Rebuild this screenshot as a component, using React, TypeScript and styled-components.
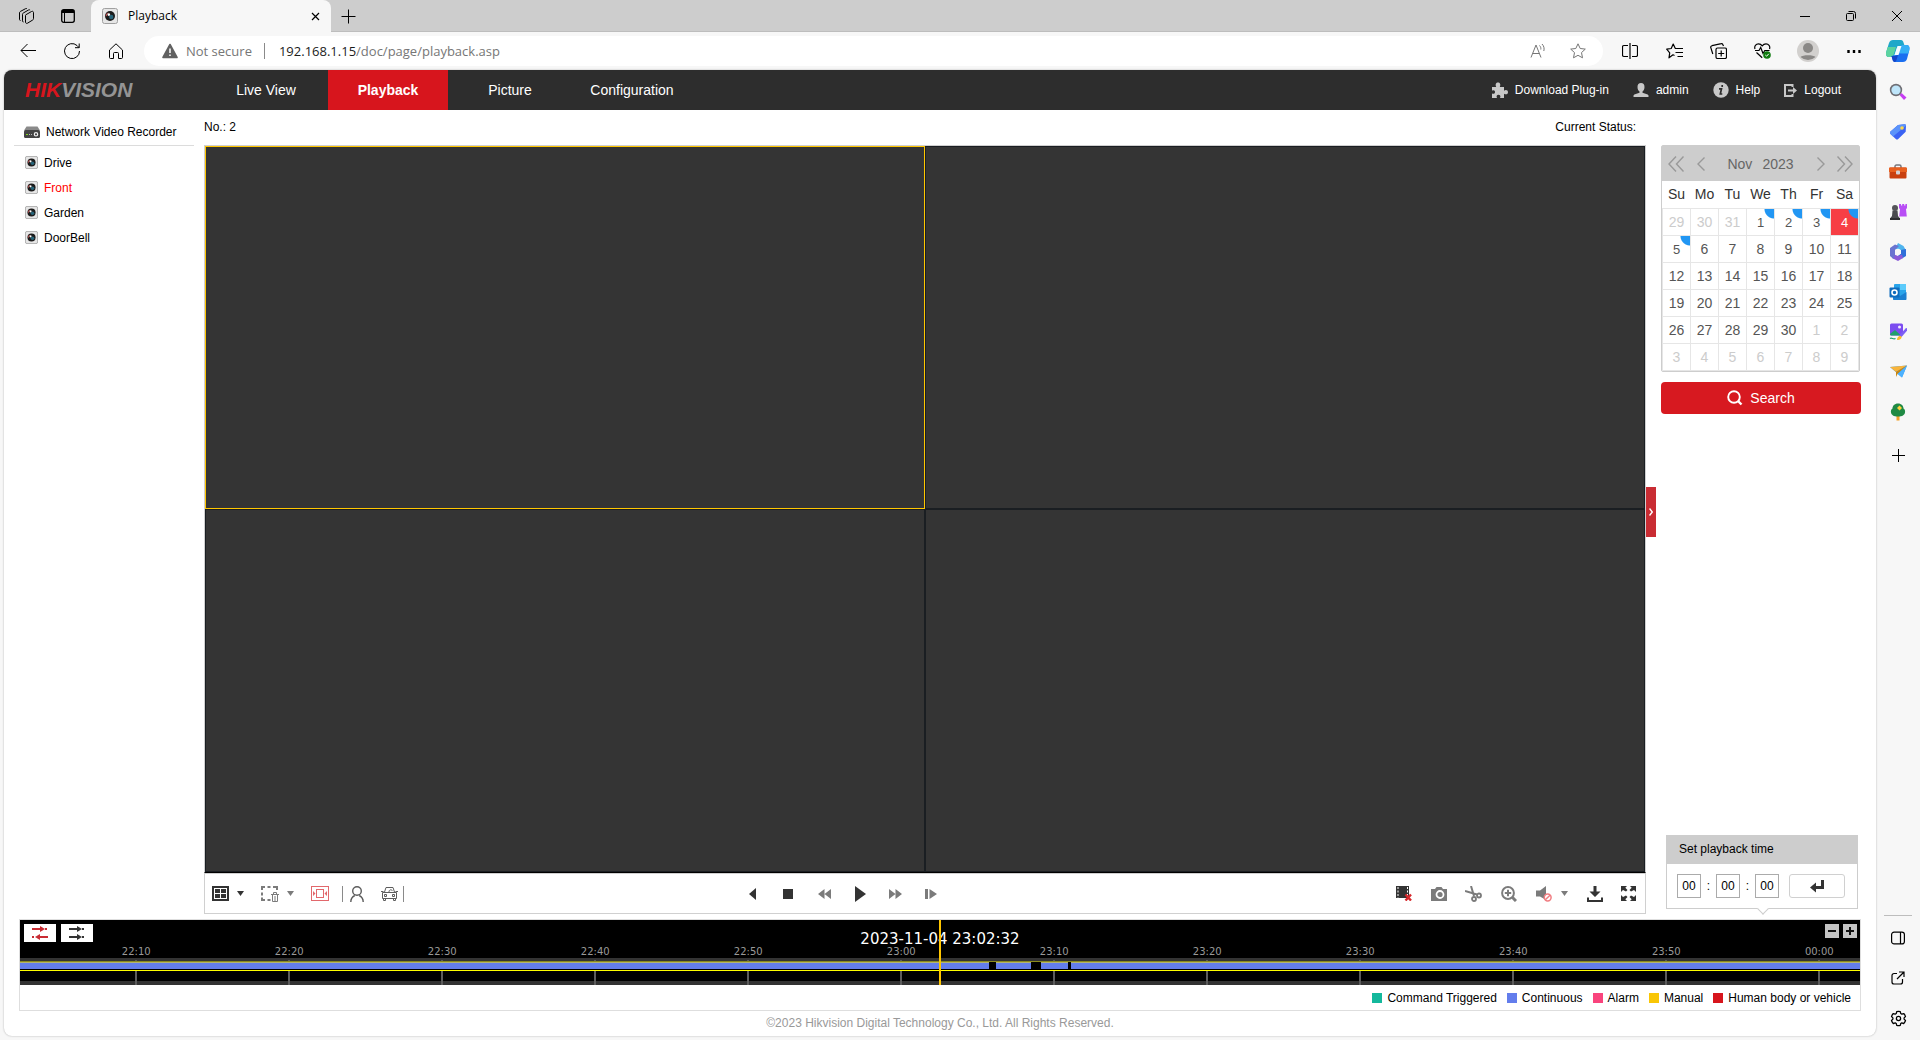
import React from "react";
import styled, { createGlobalStyle, css } from "styled-components";

const UI_FONT = '"Open Sans", "Noto Sans", sans-serif';
const PAGE_FONT = '"Liberation Sans", Arial, sans-serif';
const CANVAS_FONT = '"DejaVu Sans", Verdana, sans-serif';

const GlobalStyle = createGlobalStyle`
  *, *::before, *::after { box-sizing: border-box; }
  body { margin: 0; background: #f7f7f7; color: #000; font-family: ${PAGE_FONT}; font-size: 12px; line-height: 16px; }
  button, input { font: inherit; color: inherit; }
  ul { list-style: none; margin: 0; padding: 0; }
  svg { display: block; flex: none; }
`;

/* ---------- shared ---------- */

const PlainButton = styled.button`
  display: flex;
  align-items: center;
  justify-content: center;
  padding: 0;
  border: 0;
  background: none;
  cursor: pointer;
`;

type IconProps = { w: number; h?: number; box?: string; children: React.ReactNode };
const Icon = ({ w, h = w, box, children }: IconProps) => (
  <svg width={w} height={h} viewBox={box ?? `0 0 ${w} ${h}`} fill="none" stroke="currentColor" aria-hidden="true">
    {children}
  </svg>
);

/* ---------- browser window ---------- */

const Window = styled.div`
  display: flex;
  flex-direction: column;
  min-height: 100vh;
`;

const TitleBar = styled.header`
  display: flex;
  height: 32px;
  background: #cdcdcd;
  box-shadow: inset 0 -1px 0 #bdbdbd;
  font-family: ${UI_FONT};
`;

const TitleTools = styled.div`
  display: flex;
  padding: 0 2px 0 5px;
`;

const TitleTool = styled(PlainButton)`
  width: 42px;
`;

const Tab = styled.div`
  display: flex;
  align-items: center;
  gap: 10px;
  width: 240px;
  height: 32px;
  padding: 0 8px 0 11px;
  border-radius: 8px 8px 0 0;
  background: #f7f7f7;
`;

const TabTitle = styled.span`
  flex: 1;
  font-size: 12px;
`;

const TabClose = styled(PlainButton)`
  width: 16px;
  height: 16px;
`;

const NewTab = styled(PlainButton)`
  width: 34px;
`;

const WindowControls = styled.div`
  display: flex;
  margin-left: auto;
`;

const WindowControl = styled(PlainButton)`
  width: 46px;
`;

const Toolbar = styled.div`
  display: flex;
  align-items: center;
  height: 38px;
  padding-left: 6px;
  font-family: ${UI_FONT};
`;

const ToolbarButton = styled(PlainButton)<{ $w?: number }>`
  width: ${(p) => p.$w ?? 44}px;
  height: 30px;
`;

const AddressBar = styled.div`
  display: flex;
  flex: 1;
  align-items: center;
  height: 30px;
  margin: 0 5px 0 6px;
  padding: 0 5px 0 18px;
  border-radius: 15px;
  background: #fff;
  color: #767676;
  font-size: 13px;
`;

const Security = styled.span`
  display: flex;
  align-items: center;
  gap: 8px;
  padding-right: 12px;
  border-right: 1px solid #8a8a8a;
`;

const Url = styled.span`
  flex: 1;
  padding-left: 14px;
  b {
    color: #1b1b1b;
    font-weight: 400;
  }
`;

const Body = styled.div`
  display: flex;
  flex: 1;
`;

const Rail = styled.aside`
  display: flex;
  flex-direction: column;
  width: 44px;
  padding: 2px 0;
`;

const RailButton = styled(PlainButton)`
  width: 44px;
  height: 40px;
`;

const RailAdd = styled(RailButton)`
  height: 46px;
`;

const RailBottom = styled.div`
  margin-top: auto;
`;

const RailRule = styled.hr`
  width: 28px;
  margin: 0 auto 2px;
  border: 0;
  border-top: 1px solid #bdbdbd;
`;

/* ---------- recorder page ---------- */

const Page = styled.main`
  display: flex;
  flex: 1;
  flex-direction: column;
  margin: 0 0 4px 4px;
  border-radius: 8px;
  background: #fff;
  box-shadow: 0 0 2px rgba(0, 0, 0, 0.3);
  overflow: hidden;
`;

const Header = styled.div`
  display: flex;
  align-items: center;
  height: 40px;
  padding: 0 35px 0 21px;
  background: #2d2d2d;
  color: #fff;
`;

const Logo = styled.span`
  width: 181px;
  color: #949494;
  font-size: 21px;
  font-style: italic;
  font-weight: 700;
  line-height: 40px;
  b {
    color: #d7151d;
  }
`;

const Nav = styled.nav`
  display: flex;
  gap: 2px;
`;

const NavLink = styled.a<{ $active?: boolean }>`
  width: 120px;
  color: #fff;
  font-size: 14px;
  font-weight: ${(p) => (p.$active ? 700 : 400)};
  line-height: 40px;
  text-align: center;
  text-decoration: none;
  background: ${(p) => (p.$active ? "#d7151d" : "none")};
`;

const UserLinks = styled.div`
  display: flex;
  gap: 24px;
  margin-left: auto;
`;

const UserLink = styled.a`
  display: flex;
  align-items: center;
  gap: 7px;
  color: #fff;
  text-decoration: none;
  svg {
    color: #c8c8c8;
  }
`;

const Workspace = styled.div`
  display: flex;
  flex: 1;
  padding-right: 15px;
`;

const Devices = styled.aside`
  width: 180px;
  margin: 0 10px;
`;

const DeviceTitle = styled.div`
  display: flex;
  align-items: center;
  gap: 6px;
  height: 36px;
  padding: 8px 0 0 10px;
  border-bottom: 1px solid #dcdcdc;
`;

const ChannelList = styled.ul`
  && {
    padding: 4px 0 0 11px;
  }
`;

const Channel = styled(PlainButton)<{ $active?: boolean }>`
  gap: 6px;
  height: 25px;
  color: ${(p) => (p.$active ? "#f00" : "#000")};
`;

const Viewer = styled.section`
  display: flex;
  flex: 1;
  flex-direction: column;
`;

const Status = styled.div`
  display: flex;
  align-items: center;
  justify-content: space-between;
  height: 35px;
  padding: 0 10px 1px 0;
`;

const VideoGrid = styled.div`
  display: grid;
  flex: 1;
  grid-template: 1fr 1fr / 1fr 1fr;
  border: 1px solid #d0d0d0;
  border-bottom: 1px solid #000;
`;

const VideoCell = styled.button<{ $active?: boolean }>`
  padding: 0;
  border: 1px solid ${(p) => (p.$active ? "#ffc600" : "#1a1e22")};
  background: #343434;
`;

const Controls = styled.div`
  display: flex;
  height: 41px;
  border: 1px solid #d0d0d0;
  color: #7b7b7b;
`;

const ControlsLeft = styled.div`
  display: flex;
  flex: 3 0 0;
  align-items: center;
  gap: 17px;
  padding-left: 7px;
`;

const ControlsCenter = styled.div`
  display: flex;
`;

const ControlsRight = styled.div`
  display: flex;
  flex: 4 0 0;
  justify-content: flex-end;
`;

const SplitControl = styled(PlainButton)<{ $dark?: boolean }>`
  gap: 8px;
  color: ${(p) => (p.$dark ? "#333" : "#7b7b7b")};
`;

const Filters = styled.div`
  display: flex;
  gap: 17px;
  height: 16px;
  margin-left: -4px;
  padding: 0 5px 0 7px;
  border: solid #8a8a8a;
  border-width: 0 1px;
  color: #5c5c5c;
`;

const ControlButton = styled(PlainButton)<{ $w?: number; $dark?: boolean }>`
  width: ${(p) => p.$w ?? 35}px;
  color: ${(p) => (p.$dark ? "#333" : "#7b7b7b")};
`;

const CaretButton = styled(ControlButton)`
  justify-content: flex-start;
`;

const SideHandle = styled(PlainButton)`
  align-self: center;
  width: 10px;
  height: 50px;
  background: #c92c33;
  color: #fff;
`;

const SidePanel = styled.aside`
  display: flex;
  flex-direction: column;
  width: 205px;
  padding: 35px 0 5px 5px;
`;

const Calendar = styled.section`
  width: 199px;
  border: 1px solid #cdcdcd;
  border-radius: 2px;
`;

const CalendarHead = styled.div`
  display: flex;
  align-items: center;
  height: 35px;
  padding: 0 6px;
  background: #cdcdcd;
  color: #666;
  font-size: 14px;
`;

const CalendarTitle = styled.span`
  display: flex;
  flex: 1;
  gap: 10px;
  justify-content: center;
`;

const CalendarStep = styled(PlainButton)<{ $w: number }>`
  width: ${(p) => p.$w}px;
  height: 20px;
  color: #999;
`;

const MonthTable = styled.table`
  width: 197px;
  border-collapse: collapse;
  table-layout: fixed;
  font-size: 14px;
  th {
    height: 27px;
    padding: 0;
    color: #333;
    font-weight: 400;
  }
`;

const Day = styled.td<{ $muted: boolean; $marked: boolean; $selected: boolean }>`
  height: 27px;
  padding: 0;
  border: 1px solid #e6e6e6;
  background-clip: padding-box;
  color: ${(p) => (p.$muted ? "#ccc" : "#555")};
  text-align: center;
  ${(p) =>
    p.$marked &&
    css`
      padding-top: 2px;
      background: radial-gradient(circle at 100% 0, #2196f3 9px, transparent 10px) no-repeat padding-box;
      font-size: 13px;
    `}
  ${(p) =>
    p.$selected &&
    css`
      background: radial-gradient(circle at 100% 0, #2196f3 9px, #f73f45 10px) no-repeat padding-box;
      color: #fff;
    `}
`;

const SearchButton = styled(PlainButton)`
  gap: 7px;
  height: 32px;
  margin-top: 10px;
  border-radius: 4px;
  background: #d71920;
  color: #fff;
  font-size: 14px;
`;

const TimeBox = styled.form`
  position: relative;
  margin: auto 3px 0 5px;
  border: 1px solid #cdcdcd;
  background: #fff;
  &::after {
    content: "";
    position: absolute;
    bottom: -5px;
    left: 92px;
    width: 8px;
    height: 8px;
    border: solid #cdcdcd;
    border-width: 0 1px 1px 0;
    background: #fff;
    transform: rotate(45deg);
  }
`;

const TimeTitle = styled.div`
  padding: 5px 12px 7px;
  background: #cdcdcd;
`;

const TimeFields = styled.div`
  display: flex;
  align-items: center;
  padding: 10px 12px 10px 10px;
`;

const TimeInput = styled.input`
  width: 24px;
  height: 24px;
  padding: 0;
  border: 1px solid #ababab;
  text-align: center;
`;

const Colon = styled.span`
  width: 15px;
  text-align: center;
`;

const GoButton = styled(PlainButton)`
  width: 56px;
  height: 24px;
  margin-left: auto;
  border: 1px solid #d0d0d0;
  border-radius: 3px;
  color: #333;
`;

/* ---------- timeline ---------- */

const TimelineBox = styled.section`
  margin: 5px 15px 0;
  border: 1px solid #dedede;
`;

const Timeline = styled.div`
  position: relative;
  height: 65px;
  overflow: hidden;
  background: #000;
  color: #999;
  font-family: ${CANVAS_FONT};
`;

const SyncButtons = styled.div`
  position: absolute;
  top: 4px;
  left: 4px;
  display: flex;
  gap: 5px;
`;

const SyncButton = styled(PlainButton)<{ $on?: boolean }>`
  width: 32px;
  height: 18px;
  background: #fff;
  color: ${(p) => (p.$on ? "#c92c33" : "#333")};
`;

const ZoomButtons = styled.div`
  position: absolute;
  top: 4px;
  right: 3px;
  display: flex;
  gap: 4px;
`;

const ZoomButton = styled(PlainButton)`
  width: 14px;
  height: 14px;
  background: #c4c4c4;
  color: #111;
`;

const Band = styled.div<{ $top: number; $h: number; $color: string }>`
  position: absolute;
  top: ${(p) => p.$top}px;
  right: 0;
  left: 0;
  height: ${(p) => p.$h}px;
  background: ${(p) => p.$color};
`;

const Gap = styled.div`
  position: absolute;
  top: 42px;
  height: 7px;
  background: #000;
`;

const Tick = styled.div`
  position: absolute;
  top: 26px;
  width: 60px;
  margin-left: -30px;
  font-size: 10px;
  line-height: 12px;
  text-align: center;
`;

const TickLine = styled.div<{ $top: number; $h: number }>`
  position: absolute;
  top: ${(p) => p.$top}px;
  width: 2px;
  height: ${(p) => p.$h}px;
  margin-left: -1px;
  background: #5c5c5c;
`;

const Cursor = styled.div`
  position: absolute;
  top: 0;
  bottom: 0;
  left: 50%;
  width: 2px;
  margin-left: -1px;
  background: #ffc600;
`;

const Now = styled.time`
  position: absolute;
  top: 11px;
  right: 0;
  left: 0;
  color: #fff;
  font-size: 15px;
  line-height: 16px;
  text-align: center;
`;

const Legend = styled.ul`
  && {
    display: flex;
    gap: 10px;
    align-items: center;
    justify-content: flex-end;
    height: 25px;
    padding-right: 9px;
  }
`;

const LegendItem = styled.li<{ $color: string }>`
  display: flex;
  gap: 5px;
  align-items: center;
  &::before {
    content: "";
    width: 10px;
    height: 10px;
    background: ${(p) => p.$color};
  }
`;

const Footer = styled.footer`
  height: 25px;
  color: #999;
  line-height: 24px;
  text-align: center;
`;

/* ---------- drawings ---------- */

const CameraIcon = ({ size }: { size: number }) => (
  <Icon w={size} box="0 0 16 16">
    <rect x="0.5" y="0.5" width="15" height="15" rx="2" fill="#e6e6e6" stroke="#a0a0a0" />
    <circle cx="8" cy="8" r="5" fill="#1c1c1c" stroke="none" />
    <circle cx="9.200" cy="9" r="2.200" fill="#28657a" stroke="none" />
    <path d="M5.800 4.800a4 4 0 0 0-1.600 3.400" stroke="#d55" />
    <circle cx="6.800" cy="6.600" r="1.300" fill="#fff" stroke="none" />
  </Icon>
);

const Caret = () => (
  <Icon w={7} h={5}>
    <path d="M0 0h7L3.5 5z" fill="currentColor" stroke="none" />
  </Icon>
);

const SyncIcon = ({ back }: { back?: boolean }) => (
  <Icon w={18} h={14}>
    <path d="M1 3h9M14 3h2" strokeWidth="2" />
    <path d="M9 0l5 3-5 3z" fill="currentColor" stroke="none" />
    {back ? (
      <>
        <path d="M8 11h9M1 11h2" strokeWidth="2" />
        <path d="M9 8l-5 3 5 3z" fill="currentColor" stroke="none" />
      </>
    ) : (
      <>
        <path d="M1 11h9M14 11h2" strokeWidth="2" />
        <path d="M9 8l5 3-5 3z" fill="currentColor" stroke="none" />
      </>
    )}
  </Icon>
);

const railIcons: [string, React.ReactNode][] = [
  [
    "Search",
    <g stroke="none" key="i">
      <path d="M10.500 12l2-2 5 4.500-2.500 2.500z" fill="#c63df2" />
      <circle cx="7" cy="7" r="6.200" fill="#6f6f75" />
      <circle cx="7" cy="7" r="4.600" fill="#bfe6fb" />
    </g>,
  ],
  [
    "Shopping",
    <g stroke="none" key="i">
      <path d="M9 2l6.500-.8c1 0 1.500.5 1.500 1.500l-.3 6-7.500 7.300c-.7.700-1.700.700-2.400 0L1.500 11c-.7-.7-.7-1.700 0-2.400z" fill="#3b63f3" />
      <path d="M9 2l6.500-.8c1 0 1.500.5 1.500 1.500L4 13.500 1.500 11c-.7-.7-.7-1.700 0-2.400z" fill="#5b93fa" />
      <circle cx="13" cy="5" r="1.800" fill="#ffd84a" />
    </g>,
  ],
  [
    "Tools",
    <g key="i">
      <path d="M6 5V3.500c0-.8.5-1.500 1.500-1.500h3c1 0 1.500.7 1.500 1.500V5" stroke="#77777d" strokeWidth="1.500" />
      <rect x="0.500" y="4.500" width="17" height="11" rx="1" fill="#c9400f" stroke="none" />
      <path d="M0 5.500c0-.6.400-1 1-1h16c.6 0 1 .4 1 1V9H0z" fill="#e8601f" stroke="none" />
      <rect x="7" y="7.500" width="4" height="4" rx="1" fill="#d3d3d8" stroke="none" />
    </g>,
  ],
  [
    "Games",
    <g stroke="none" key="i">
      <path d="M10 1h2v1.500h1.200V1h2v1.500h1.200V1H18v4l-1 1.200.8 7.300h-7.600L11 6.200 10 5z" fill="#b84ef5" />
      <circle cx="6" cy="5" r="3" fill="#55555a" />
      <path d="M3.500 7.500h5L9 13l2 2.500V17H1v-1.500L3 13z" fill="#4a4a4f" />
      <path d="M1 15h10v2H1z" fill="#2e2e32" />
    </g>,
  ],
  [
    "Microsoft 365",
    <g stroke="none" key="i">
      <path d="M9 0l5.500 3L17 7.500 12.500 9 11 6.500 6 6z" fill="#4fb4ee" />
      <path d="M17 6v7l-4 2.500-4-3 3-2V7z" fill="#2f6fd9" />
      <path d="M14 15l-5 3-6-3 1-4 5 2 4-1.500z" fill="#8a5bd8" />
      <path d="M1 5l5-3.500L10 3 6 7v5l-1.500 4L1 13z" fill="#6a74d0" />
      <path d="M9 5.500l3 1.700v3.600l-3 1.700-3-1.700V7.200z" fill="#f7f7f7" />
    </g>,
  ],
  [
    "Outlook",
    <g stroke="none" key="i">
      <rect x="5" y="1" width="12" height="12" rx="1" fill="#2aa4ea" />
      <rect x="11" y="1" width="6" height="6" fill="#5ccbfb" />
      <path d="M4 9l7 4 6.500-4v7c0 .6-.4 1-1 1H5c-.6 0-1-.4-1-1z" fill="#1b7fd1" />
      <rect x="0.500" y="4.500" width="10" height="10" rx="1" fill="#0f6cbd" />
      <circle cx="5.500" cy="9.500" r="2.500" fill="none" stroke="#fff" strokeWidth="1.600" />
    </g>,
  ],
  [
    "Image Creator",
    <g stroke="none" key="i">
      <rect x="1" y="0.500" width="13" height="12" rx="1.500" fill="#7c4df0" />
      <circle cx="10.500" cy="4" r="1.500" fill="#f3e8ff" />
      <path d="M1 11l5-4 6 5.500H2.500C1.500 12.500 1 12 1 11z" fill="#1fa06b" />
      <path d="M17.500 6.500l-6 6.500" stroke="#7d5ff5" strokeWidth="2.600" strokeLinecap="round" />
      <path d="M8 17c0-3 2-4.500 4-4 1.500 2-.5 4-4 4z" fill="#fbbc2b" />
      <path d="M1 15.500c2-1.500 3 1.500 5.500 0" stroke="#1fa06b" strokeWidth="1.300" fill="none" />
    </g>,
  ],
  [
    "Drop",
    <g stroke="none" key="i">
      <path d="M1 4l17-1.500L13 14.500 8 10z" fill="#3297f0" />
      <path d="M1 4l17-1.500L7 9z" fill="#f9b43a" />
      <path d="M7 9L18 2.500 8.500 11 7 14z" fill="#c98612" />
      <path d="M8.500 11L18 2.500 13 14.500z" fill="#4db2ff" />
    </g>,
  ],
  [
    "E-tree",
    <g stroke="none" key="i">
      <rect x="7.500" y="10" width="3" height="7.500" fill="#f2a12b" />
      <path d="M9 .5c3.500 0 5.500 2.500 5.500 5 1.500 1 1.800 2.500 1.500 4-.5 2.500-2.500 4-7 4s-6.500-1.500-7-4c-.3-1.500 0-3 1.500-4 0-2.500 2-5 5.500-5z" fill="#1f8a44" />
      <path d="M10.500 2.500l2.500 2.500-2.500 2.500L8 5z" fill="#ffd23d" />
    </g>,
  ],
];

/* ---------- data ---------- */

const channels = ["Drive", "Front", "Garden", "DoorBell"];
const weekdays = ["Su", "Mo", "Tu", "We", "Th", "Fr", "Sa"];
const weeks = [0, 1, 2, 3, 4, 5].map((week) =>
  weekdays.map((_, day) => {
    const n = week * 7 + day - 2;
    if (n < 1) return { label: 31 + n, muted: true, n };
    if (n > 30) return { label: n - 30, muted: true, n };
    return { label: n, muted: false, n };
  })
);

const RANGE_START = 22 * 60 + 2.4;
const RANGE_MINUTES = 120.26;
const percent = (minutes: number) => `${((minutes - RANGE_START) / RANGE_MINUTES) * 100}%`;
const ticks = Array.from({ length: 12 }, (_, i) => 22 * 60 + 10 + i * 10);
const clock = (minutes: number) =>
  `${String(Math.floor(minutes / 60) % 24).padStart(2, "0")}:${String(minutes % 60).padStart(2, "0")}`;
const gaps = [
  { from: 1385.7, length: 0.46 },
  { from: 1388.5, length: 0.66 },
  { from: 1390.9, length: 0.2 },
];

const legend = [
  ["Command Triggered", "#14b89c"],
  ["Continuous", "#637dec"],
  ["Alarm", "#f9447d"],
  ["Manual", "#f9c606"],
  ["Human body or vehicle", "#d7151d"],
];

/* ---------- sections ---------- */

const BrowserTop = () => (
  <>
    <TitleBar>
      <TitleTools>
        <TitleTool aria-label="Workspaces">
          <Icon w={16}>
            <path d="M7.800 6.800l5.700-3.300c1-.5 2 0 2 1v6.200c0 .6-.3 1-.8 1.300L9.500 15.200c-1 .5-2 0-2-1V7.500c0-.3.1-.5.3-.7z" />
            <path d="M5.500 14c-.7 0-1-.5-1-1.200V6.300c0-.6.300-1 .8-1.300L10.500 2c.6-.3 1.200-.3 1.600.1M2.500 12.500c-.7 0-1-.5-1-1.200V4.800c0-.6.3-1 .8-1.300L7.500.7c.6-.3 1-.3 1.500 0" />
          </Icon>
        </TitleTool>
        <TitleTool aria-label="Tab actions">
          <Icon w={14}>
            <rect x="0.700" y="0.700" width="12.600" height="12.600" rx="2" strokeWidth="1.300" />
            <path d="M1 2.500h12" strokeWidth="3" />
            <path d="M3.500 4v9" />
          </Icon>
        </TitleTool>
      </TitleTools>
      <Tab>
        <CameraIcon size={16} />
        <TabTitle>Playback</TabTitle>
        <TabClose aria-label="Close tab">
          <Icon w={9}>
            <path d="M1 1l7 7M8 1L1 8" strokeWidth="1.200" />
          </Icon>
        </TabClose>
      </Tab>
      <NewTab aria-label="New tab">
        <Icon w={15}>
          <path d="M7.500 0.500v14M.5 7.500h14" />
        </Icon>
      </NewTab>
      <WindowControls>
        <WindowControl aria-label="Minimize">
          <Icon w={10}>
            <path d="M0 5.500h10" />
          </Icon>
        </WindowControl>
        <WindowControl aria-label="Restore">
          <Icon w={10}>
            <rect x="0.500" y="2.500" width="7" height="7" rx="1" />
            <path d="M2.500 0.500h5a2 2 0 0 1 2 2v5" />
          </Icon>
        </WindowControl>
        <WindowControl aria-label="Close">
          <Icon w={10}>
            <path d="M0 0l10 10M10 0L0 10" />
          </Icon>
        </WindowControl>
      </WindowControls>
    </TitleBar>
    <Toolbar>
      <ToolbarButton aria-label="Back">
        <Icon w={16}>
          <path d="M16 7.500H1M7.500 1L1 7.500 7.500 14" />
        </Icon>
      </ToolbarButton>
      <ToolbarButton aria-label="Refresh">
        <Icon w={16}>
          <path d="M15.500 8A7.500 7.500 0 1 1 13 2.500L15 4.500M15.200.5v4.200H11" />
        </Icon>
      </ToolbarButton>
      <ToolbarButton aria-label="Home">
        <Icon w={16}>
          <path d="M1.500 7L8 .8 14.500 7v7.500c0 .6-.4 1-1 1h-3v-5a1 1 0 0 0-1-1h-3a1 1 0 0 0-1 1v5h-3c-.6 0-1-.4-1-1z" />
        </Icon>
      </ToolbarButton>
      <AddressBar>
        <Security>
          <Icon w={16}>
            <path d="M8 1.500L15 14.500H1z" fill="#616161" stroke="#616161" strokeWidth="1.600" strokeLinejoin="round" />
            <path d="M8 5.500v4.500M8 11.500v1.500" stroke="#fff" strokeWidth="1.500" />
          </Icon>
          Not secure
        </Security>
        <Url>
          <b>192.168.1.15</b>/doc/page/playback.asp
        </Url>
        <ToolbarButton $w={40} aria-label="Read aloud">
          <Icon w={16}>
            <path d="M1 14.500L6 2l5 12.500M2.800 10.500h6.400M9.500 2.500c1.200 1.200 1.500 2.500 1.300 4M12 1c2 2 2.500 4.500 1.800 7" />
          </Icon>
        </ToolbarButton>
        <ToolbarButton $w={40} aria-label="Add to favorites">
          <Icon w={16}>
            <path d="M8 .8l2.200 4.700 5.100.6-3.800 3.500 1 5.200L8 12.300l-4.500 2.500 1-5.200L.7 6.100l5.100-.6z" strokeLinejoin="round" />
          </Icon>
        </ToolbarButton>
      </AddressBar>
      <ToolbarButton aria-label="Split screen">
        <Icon w={16}>
          <path d="M6 2.500H2a1.500 1.500 0 0 0-1.500 1.500v8A1.500 1.500 0 0 0 2 13.500h4M10 2.500h4A1.500 1.500 0 0 1 15.500 4v8a1.500 1.500 0 0 1-1.500 1.500h-4M8 0v16" strokeWidth="1.200" />
        </Icon>
      </ToolbarButton>
      <ToolbarButton aria-label="Favorites">
        <Icon w={17} h={16}>
          <path d="M8.500 12.500L7 11.800 3 14.800l.7-5L.7 6.200l4.500-.7L7.200 1l2 4.300 1.300.2M10.500 5.500H17M9.500 9.500H17M11.500 13.500H17" strokeLinejoin="round" strokeWidth="1.200" />
        </Icon>
      </ToolbarButton>
      <ToolbarButton aria-label="Collections">
        <Icon w={17} h={16}>
          <rect x="6" y="5" width="10.500" height="10.500" rx="1.500" strokeWidth="1.200" />
          <path d="M11.200 7.500v6M8.200 10.500h6M13.500 3L12.800 1.500c-.2-.7-.8-1-1.500-.8L2 2.700c-1 .3-1.500 1-1.200 2l2 6.300" strokeWidth="1.200" />
        </Icon>
      </ToolbarButton>
      <ToolbarButton aria-label="Browser essentials">
        <Icon w={17} h={16}>
          <path d="M1 6C0 3 2 .8 4.500.8c1.500 0 2.800.7 3.700 2C9.200 1.500 10.500.8 12 .8 14.500.8 16.500 3 15.500 6M1 7.500h4l1.700-3 2.300 6 1.800-3h4.700M2.500 9.500l5.700 5.200" strokeWidth="1.200" />
          <circle cx="13" cy="12" r="3.800" fill="#107c10" stroke="none" />
          <path d="M11.300 12l1.300 1.200 2.200-2.400" stroke="#fff" />
        </Icon>
      </ToolbarButton>
      <ToolbarButton $w={48} aria-label="Profile">
        <Icon w={22}>
          <circle cx="11" cy="11" r="11" fill="#d2d0ce" stroke="none" />
          <circle cx="11" cy="8" r="5" fill="#8a8886" stroke="none" />
          <path d="M3.500 17c2-2.500 13-2.500 15 0a11 11 0 0 1-15 0z" fill="#8a8886" stroke="none" />
        </Icon>
      </ToolbarButton>
      <ToolbarButton aria-label="Settings and more">
        <Icon w={14} h={3}>
          <path d="M1.500 0v3M7 0v3M12.500 0v3" strokeWidth="2.400" />
        </Icon>
      </ToolbarButton>
      <ToolbarButton aria-label="Copilot">
        <Icon w={24} h={22}>
          <g stroke="none">
            <path d="M7 0h8c1.500 0 2 1 2.500 2.500L19 7h-5l-3 1-3 9H3c-2.500 0-3.500-2-2.800-5L3 3C3.700 1 5 0 7 0z" fill="#1fa8c9" />
            <path d="M.2 12l1.600-5H10l-2.500 8c-.5 1.500-1.500 2-3 2H3C.5 17-.5 15 .2 12z" fill="#5cd3a0" />
            <path d="M17 22H9c-1.500 0-2-1-2.500-2.500L5.500 16l4-1 3-2 3-8h5c2.500 0 3.500 2 2.800 5L21 19c-.7 2-2 3-4 3z" fill="#1b6ff0" />
            <path d="M15.500 5h5c2.500 0 3.500 2 2.800 5l-1 3.500H12.500z" fill="#35b0f5" />
            <path d="M5.500 16h4l2.500-1-1.500 5c-.3 1.200-1 2-2 2-1.200-.3-1.700-1.200-2-2.500z" fill="#1446c8" />
            <path d="M11.500 6h4l-3 9h-4z" fill="#f4fbff" />
          </g>
        </Icon>
      </ToolbarButton>
    </Toolbar>
  </>
);

const PageHeader = () => (
  <Header>
    <Logo>
      <b>HIK</b>VISION
    </Logo>
    <Nav>
      <NavLink href="#live">Live View</NavLink>
      <NavLink href="#playback" $active>
        Playback
      </NavLink>
      <NavLink href="#picture">Picture</NavLink>
      <NavLink href="#configuration">Configuration</NavLink>
    </Nav>
    <UserLinks>
      <UserLink href="#plugin">
        <Icon w={16}>
          <path d="M0 5h4.200C3 2.500 4 .5 6 .5S9 2.500 7.800 5H12v3.700c2-1.200 4-.5 4 1.500s-2 2.700-4 1.500V16H8c1-2 .2-3.300-1.500-3.300S4 14 5 16H0v-4.500c2 1 3-.2 3-1.500S2 7.700 0 8.700z" fill="currentColor" stroke="none" />
        </Icon>
        Download Plug-in
      </UserLink>
      <UserLink href="#user">
        <Icon w={16}>
          <path d="M8 1c2.300 0 3.500 1.500 3.500 4 0 2-.8 3.500-2 4.500v1.300l4.500 1.500c1 .3 1.500.8 1.500 1.700v1H.5v-1c0-.9.5-1.400 1.500-1.700l4.500-1.500V9.500c-1.200-1-2-2.500-2-4.500 0-2.500 1.200-4 3.500-4z" fill="currentColor" stroke="none" />
        </Icon>
        admin
      </UserLink>
      <UserLink href="#help">
        <Icon w={16}>
          <circle cx="8" cy="8" r="7.700" fill="currentColor" stroke="none" />
          <path d="M6 6.800h2.500L7.300 12h2M9.200 3v2" stroke="#2d2d2d" strokeWidth="1.700" />
        </Icon>
        Help
      </UserLink>
      <UserLink href="#logout">
        <Icon w={13}>
          <path d="M8.500 3V1H1v11h7.500v-2" strokeWidth="2" />
          <path d="M4 5.500h5V3l4 3.500L9 10V7.500H4z" fill="currentColor" stroke="none" />
        </Icon>
        Logout
      </UserLink>
    </UserLinks>
  </Header>
);

const DeviceList = () => (
  <Devices>
    <DeviceTitle>
      <Icon w={16} h={12}>
        <g stroke="none">
          <path d="M2.500.5h11L16 4.500H0z" fill="#8a8a8a" />
          <rect y="4" width="16" height="8" rx="1.500" fill="#444" />
          <path d="M2 8.500h2" stroke="#7ed321" />
          <path d="M5 8.500h4" stroke="#bbb" strokeDasharray="1 1" />
          <circle cx="12" cy="8.300" r="1.700" stroke="#eee" strokeWidth="1.200" />
        </g>
      </Icon>
      Network Video Recorder
    </DeviceTitle>
    <ChannelList>
      {channels.map((name) => (
        <li key={name}>
          <Channel $active={name === "Front"}>
            <CameraIcon size={13} />
            {name}
          </Channel>
        </li>
      ))}
    </ChannelList>
  </Devices>
);

const PlayerControls = () => (
  <Controls>
    <ControlsLeft>
      <SplitControl $dark aria-label="Window division">
        <Icon w={17} h={15}>
          <rect x="1" y="1" width="15" height="13" strokeWidth="2" />
          <path d="M3 3h5v4H3zM9 3h5v4H9zM3 8h5v4H3zM9 8h5v4H9z" fill="currentColor" stroke="none" />
        </Icon>
        <Caret />
      </SplitControl>
      <SplitControl aria-label="Clear regions">
        <Icon w={18} h={16}>
          <path d="M1 4V1h3M6.500 1h3M12 1h4v3M1 6.500v3M1 11.500V14h3M6.500 14h3" strokeWidth="2" />
          <path d="M10 8.500h8M12.500 8V6.500h3V8M11.500 9v6.500h5V9M14 10v5" />
        </Icon>
        <Caret />
      </SplitControl>
      <PlainButton aria-label="Target region">
        <Icon w={18} h={15}>
          <rect x="0.500" y="0.500" width="17" height="14" stroke="#e2686c" />
          <rect x="5.500" y="3.500" width="7" height="8" stroke="#e2686c" />
          <path d="M2 5l2.500 2.500L2 10zM16 5l-2.500 2.500L16 10z" fill="#e2686c" stroke="none" />
        </Icon>
      </PlainButton>
      <Filters>
        <PlainButton aria-label="Human">
          <Icon w={14} h={16}>
            <circle cx="7" cy="5" r="4.300" strokeWidth="1.400" />
            <path d="M.8 16c0-4 2-5.500 4-6.500M13.200 16c0-4-2-5.500-4-6.500" strokeWidth="1.400" />
          </Icon>
        </PlainButton>
        <PlainButton aria-label="Vehicle">
          <Icon w={17} h={16}>
            <path d="M3.500 6L5 1.500h7L13.500 6M0 5.500h2.500M14.500 5.500H17M1.500 6.500h14v6h-14zM2.500 12.500v2h2v-2M12.500 12.500v2h2v-2M8 6c0-2.500 2.500-3 3.500-1" />
            <path d="M3.500 8.500h2v2h-2zM11.500 8.500h2v2h-2z" />
          </Icon>
        </PlainButton>
      </Filters>
    </ControlsLeft>
    <ControlsCenter>
      <ControlButton $w={36} $dark aria-label="Reverse playback">
        <Icon w={7} h={12}>
          <path d="M7 0v12L0 6z" fill="currentColor" stroke="none" />
        </Icon>
      </ControlButton>
      <ControlButton $w={36} $dark aria-label="Stop">
        <Icon w={10}>
          <path d="M0 0h10v10H0z" fill="currentColor" stroke="none" />
        </Icon>
      </ControlButton>
      <ControlButton $w={36} aria-label="Slow forward">
        <Icon w={13} h={10}>
          <path d="M6.500 0v10L0 5zM13 0v10L6.500 5z" fill="currentColor" stroke="none" />
        </Icon>
      </ControlButton>
      <ControlButton $w={36} $dark aria-label="Play">
        <Icon w={11} h={16}>
          <path d="M0 0l11 8L0 16z" fill="currentColor" stroke="none" />
        </Icon>
      </ControlButton>
      <ControlButton aria-label="Fast forward">
        <Icon w={13} h={10}>
          <path d="M0 0l6.500 5L0 10zM6.500 0L13 5l-6.500 5z" fill="currentColor" stroke="none" />
        </Icon>
      </ControlButton>
      <ControlButton aria-label="Single frame">
        <Icon w={12} h={10}>
          <path d="M0 0h3v10H0zM4.500 0L12 5l-7.500 5z" fill="currentColor" stroke="none" />
        </Icon>
      </ControlButton>
    </ControlsCenter>
    <ControlsRight>
      <ControlButton $dark aria-label="Stop all playback">
        <Icon w={16} h={15}>
          <path d="M0 0h13v12H0z" fill="currentColor" stroke="none" />
          <path d="M2 1v12M11.500 1v12" stroke="#fff" strokeDasharray="2 1.500" />
          <path d="M9.500 8.500l5.500 6M15 8.500l-5.500 6" stroke="#d7282c" strokeWidth="2.400" />
        </Icon>
      </ControlButton>
      <ControlButton aria-label="Capture">
        <Icon w={16} h={14}>
          <path d="M0 2h4l1.500-2h5L12 2h4v12H0z" fill="currentColor" stroke="none" />
          <circle cx="9" cy="7.500" r="3.500" stroke="#fff" strokeWidth="1.800" />
        </Icon>
      </ControlButton>
      <ControlButton aria-label="Clip">
        <Icon w={17} h={16}>
          <path d="M6 0l3 10M0 5l12 3.500" strokeWidth="2" />
          <circle cx="9" cy="13" r="2" strokeWidth="1.800" />
          <circle cx="14" cy="9.500" r="2" strokeWidth="1.800" />
        </Icon>
      </ControlButton>
      <ControlButton aria-label="Digital zoom">
        <Icon w={16}>
          <circle cx="7" cy="7" r="5.900" strokeWidth="2" />
          <path d="M11.500 11.500L15 15" strokeWidth="3" />
          <path d="M3.800 7h6.400M7 3.800v6.400" strokeWidth="2" />
        </Icon>
      </ControlButton>
      <ControlButton aria-label="Mute">
        <Icon w={16}>
          <path d="M0 4.500h4L10 0v14L4 10.500H0z" fill="currentColor" stroke="none" />
          <circle cx="11.700" cy="11.500" r="3.400" fill="#fff" stroke="#f07c80" strokeWidth="1.500" />
          <path d="M9.300 13.800l4.700-4.600" stroke="#f07c80" strokeWidth="1.500" />
        </Icon>
      </ControlButton>
      <CaretButton $w={16} aria-label="Volume">
        <Caret />
      </CaretButton>
      <ControlButton $dark aria-label="Download">
        <Icon w={16}>
          <path d="M6.500 0h3v5.500h4L8 11 2.500 5.500h4z" fill="currentColor" stroke="none" />
          <path d="M1 11.500V15h14v-3.500" strokeWidth="2" />
        </Icon>
      </ControlButton>
      <ControlButton $w={33} $dark aria-label="Full screen">
        <Icon w={15}>
          <path d="M0 0h6L4.300 1.700 6.500 4 5 5.500 2 4 0 6zM15 0H9l1.700 1.700L8.500 4 10 5.500l3-1.500 2 2zM0 15h6l-1.700-1.700L6.500 11 5 9.500 2 11 0 9zM15 15H9l1.700-1.700L8.500 11 10 9.500l3 1.500 2-2z" fill="currentColor" stroke="none" />
        </Icon>
      </ControlButton>
    </ControlsRight>
  </Controls>
);

const SearchPanel = () => (
  <SidePanel>
    <Calendar>
      <CalendarHead>
        <CalendarStep $w={16} aria-label="Previous year">
          <Icon w={16}>
            <path d="M8 .5L1 8l7 7.500M15.500.5L8.500 8l7 7.500" strokeWidth="1.400" />
          </Icon>
        </CalendarStep>
        <CalendarStep $w={33} aria-label="Previous month">
          <Icon w={8} h={14}>
            <path d="M7.500.5L1 7l6.500 6.500" strokeWidth="1.400" />
          </Icon>
        </CalendarStep>
        <CalendarTitle>
          <span>Nov</span>
          <span>2023</span>
        </CalendarTitle>
        <CalendarStep $w={33} aria-label="Next month">
          <Icon w={8} h={14}>
            <path d="M.5.5L7 7 .5 13.500" strokeWidth="1.400" />
          </Icon>
        </CalendarStep>
        <CalendarStep $w={16} aria-label="Next year">
          <Icon w={16}>
            <path d="M.5.5l7 7.500-7 7.500M8 .5l7 7.500-7 7.500" strokeWidth="1.400" />
          </Icon>
        </CalendarStep>
      </CalendarHead>
      <MonthTable>
        <thead>
          <tr>
            {weekdays.map((d) => (
              <th key={d} scope="col">
                {d}
              </th>
            ))}
          </tr>
        </thead>
        <tbody>
          {weeks.map((week) => (
            <tr key={week[0].n}>
              {week.map((d) => (
                <Day key={d.n} $muted={d.muted} $marked={d.n >= 1 && d.n <= 5} $selected={d.n === 4}>
                  {d.label}
                </Day>
              ))}
            </tr>
          ))}
        </tbody>
      </MonthTable>
    </Calendar>
    <SearchButton>
      <Icon w={16}>
        <circle cx="7" cy="7" r="5.800" strokeWidth="1.900" />
        <path d="M11 11l3.500 3.500" strokeWidth="2.400" />
      </Icon>
      Search
    </SearchButton>
    <TimeBox>
      <TimeTitle>Set playback time</TimeTitle>
      <TimeFields>
        <TimeInput aria-label="Hours" defaultValue="00" />
        <Colon>:</Colon>
        <TimeInput aria-label="Minutes" defaultValue="00" />
        <Colon>:</Colon>
        <TimeInput aria-label="Seconds" defaultValue="00" />
        <GoButton type="button" aria-label="Go to time">
          <Icon w={15} h={13}>
            <path d="M12.500 0v7.500H5" strokeWidth="3" />
            <path d="M6 2.500v10L0 7.500z" fill="currentColor" stroke="none" />
          </Icon>
        </GoButton>
      </TimeFields>
    </TimeBox>
  </SidePanel>
);

const RecordTimeline = () => (
  <TimelineBox>
    <Timeline>
      <Band $top={38} $h={3} $color="#333" />
      <Band $top={41} $h={1} $color="#8a8a1c" />
      <Band $top={42} $h={1} $color="#b4b46e" />
      <Band $top={43} $h={6} $color="#637dec" />
      <Band $top={50} $h={1} $color="#ff0" />
      <Band $top={61} $h={4} $color="#333" />
      {gaps.map((g) => (
        <Gap key={g.from} style={{ left: percent(g.from), width: `${(g.length / RANGE_MINUTES) * 100}%` }} />
      ))}
      {ticks.map((t) => (
        <React.Fragment key={t}>
          <Tick style={{ left: percent(t) }}>{clock(t)}</Tick>
          <TickLine $top={40} $h={1} style={{ left: percent(t) }} />
          <TickLine $top={51} $h={14} style={{ left: percent(t) }} />
        </React.Fragment>
      ))}
      <Now>2023-11-04 23:02:32</Now>
      <Cursor />
      <SyncButtons>
        <SyncButton $on aria-label="Asynchronous playback">
          <SyncIcon back />
        </SyncButton>
        <SyncButton aria-label="Synchronous playback">
          <SyncIcon />
        </SyncButton>
      </SyncButtons>
      <ZoomButtons>
        <ZoomButton aria-label="Zoom out">
          <Icon w={8}>
            <path d="M0 4h8" strokeWidth="2" />
          </Icon>
        </ZoomButton>
        <ZoomButton aria-label="Zoom in">
          <Icon w={8}>
            <path d="M0 4h8M4 0v8" strokeWidth="2" />
          </Icon>
        </ZoomButton>
      </ZoomButtons>
    </Timeline>
    <Legend>
      {legend.map(([label, color]) => (
        <LegendItem key={label} $color={color}>
          {label}
        </LegendItem>
      ))}
    </Legend>
  </TimelineBox>
);

export default function App() {
  return (
    <Window>
      <GlobalStyle />
      <BrowserTop />
      <Body>
        <Page>
          <PageHeader />
          <Workspace>
            <DeviceList />
            <Viewer>
              <Status>
                <span>No.: 2</span>
                <span>Current Status:</span>
              </Status>
              <VideoGrid>
                <VideoCell $active aria-label="Window 1" />
                <VideoCell aria-label="Window 2" />
                <VideoCell aria-label="Window 3" />
                <VideoCell aria-label="Window 4" />
              </VideoGrid>
              <PlayerControls />
            </Viewer>
            <SideHandle aria-label="Collapse panel">
              <Icon w={4} h={8}>
                <path d="M.5.5L3.300 4 .5 7.500" strokeWidth="1.400" />
              </Icon>
            </SideHandle>
            <SearchPanel />
          </Workspace>
          <RecordTimeline />
          <Footer>©2023 Hikvision Digital Technology Co., Ltd. All Rights Reserved.</Footer>
        </Page>
        <Rail>
          {railIcons.map(([label, art]) => (
            <RailButton key={label} aria-label={label}>
              <Icon w={18}>{art}</Icon>
            </RailButton>
          ))}
          <RailAdd aria-label="Customize">
            <Icon w={13}>
              <path d="M6.500 0v13M0 6.500h13" />
            </Icon>
          </RailAdd>
          <RailBottom>
            <RailRule />
            <RailButton aria-label="Hide sidebar">
              <Icon w={14}>
                <rect x="0.600" y="1.100" width="12.800" height="11.800" rx="2.500" strokeWidth="1.200" />
                <path d="M9.500 1v12" strokeWidth="1.200" />
              </Icon>
            </RailButton>
            <RailButton aria-label="Open link">
              <Icon w={14}>
                <path d="M6 2.500H3A2 2 0 0 0 1 4.500V11a2 2 0 0 0 2 2h6.500a2 2 0 0 0 2-2V8M8 1h5v5M13 1L6 8" strokeWidth="1.200" />
              </Icon>
            </RailButton>
            <RailButton aria-label="Settings">
              <Icon w={17} box="0 0 24 24">
                <g strokeWidth="1.800">
                  <circle cx="12" cy="12" r="3" />
                  <path strokeLinejoin="round" d="M9.500 2.200c1.600-.5 3.400-.5 5 0l.6 2.700 1.600.9 2.700-.8c1.200 1.200 2 2.700 2.500 4.300L19.900 11.100v1.800l2 1.900c-.5 1.600-1.300 3.100-2.500 4.300l-2.700-.9-1.600.9-.6 2.700c-1.600.5-3.400.5-5 0l-.6-2.700-1.600-.9-2.700.9c-1.200-1.200-2-2.700-2.500-4.300l2-1.900v-1.800l-2-1.800c.5-1.600 1.300-3.100 2.500-4.300l2.700.8 1.600-.9z" />
                </g>
              </Icon>
            </RailButton>
          </RailBottom>
        </Rail>
      </Body>
    </Window>
  );
}
